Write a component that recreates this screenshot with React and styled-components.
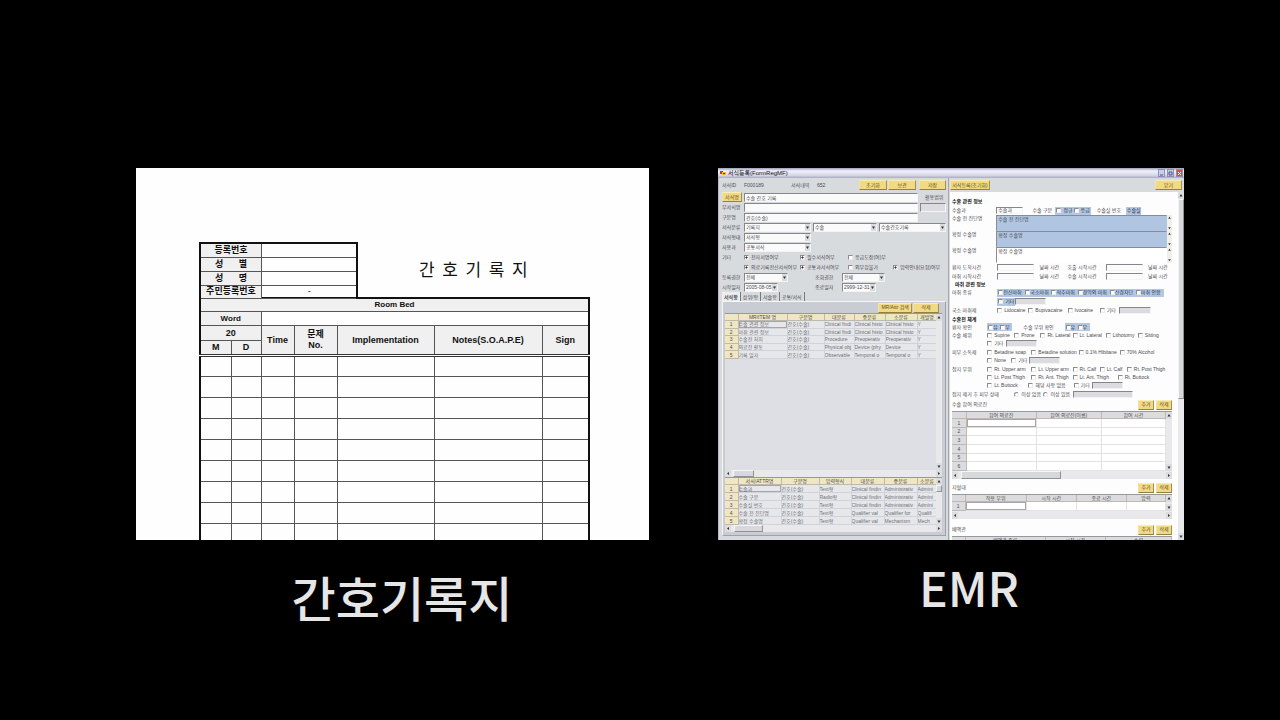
import React, { Children } from "react";
import styled, { createGlobalStyle, css } from "styled-components";

const GlobalStyle = createGlobalStyle`
  *, *::before, *::after { box-sizing: border-box; }
  body {
    margin: 0;
    background: #000;
    font-family: "Noto Sans CJK KR", "Liberation Sans", sans-serif;
  }
  button, input, select, textarea { font: inherit; color: inherit; margin: 0; }
`;

/* ---------- Page ---------- */

const Page = styled.main`
  min-height: 100vh;
  padding: 168px 96px 32px 136px;
  display: grid;
  grid-template-columns: minmax(0, 513fr) minmax(0, 466fr);
  grid-template-rows: auto 1fr;
  column-gap: 69px;
  background: #000;
`;

const Caption = styled.h2`
  margin: 0;
  padding-top: ${(p) => p.$top}px;
  padding-left: ${(p) => p.$shift}px;
  color: #e6e6e6;
  font-size: 48px;
  font-weight: 500;
  line-height: 72px;
  text-align: center;
`;

/* ---------- Paper nursing record ---------- */

const Paper = styled.section`
  padding: 74px 61px 0 63px;
  background: #fefefe;
  color: #111;
  font-family: "Liberation Sans", "Noto Sans CJK KR", sans-serif;
  font-size: 9px;
  line-height: 11px;
`;

const PaperHead = styled.header`
  display: flex;
  align-items: center;
`;

const PaperTitle = styled.h1`
  flex: 1;
  margin: 0;
  font-family: "Noto Sans CJK KR", sans-serif;
  font-size: 17px;
  font-weight: 400;
  line-height: 20px;
  text-align: center;
  white-space: pre;
`;

const paperTable = css`
  border-collapse: collapse;
  table-layout: fixed;
  border: 2px solid #111;
  th, td {
    padding: 0;
    border: 1px solid #555;
    text-align: center;
    overflow: hidden;
    white-space: nowrap;
  }
  th { background: #f0f0f0; font-weight: 700; }
`;

const InfoTable = styled.table`
  ${paperTable}
  flex: 0 0 41%;
  width: 41%;
  margin-bottom: -2px;
  border-bottom: 0;
  tr { height: 14px; }
  tr:last-child { height: 13px; }
`;

const RecordTable = styled.table`
  ${paperTable}
  width: 100%;
  border-bottom: 0;
  thead tr { height: 14px; }
  thead tr.unit { height: 15px; }
  thead tr.ward { font-size: 8px; }
  tbody tr { height: 21px; }
  tbody tr:first-child td { border-top: 3px double #333; }
  tbody tr:last-child { height: 16px; }
  tbody tr:last-child td { border-bottom: 0; }
`;

const Spread = styled.span`
  display: flex;
  justify-content: space-between;
  padding: 0 14px;
`;

function NursingRecord() {
  return (
    <Paper>
      <PaperHead>
        <InfoTable>
          <colgroup><col style={{ width: "39%" }} /><col /></colgroup>
          <tbody>
            <tr><th scope="row">등록번호</th><td /></tr>
            <tr><th scope="row"><Spread><span>성</span><span>별</span></Spread></th><td /></tr>
            <tr><th scope="row"><Spread><span>성</span><span>명</span></Spread></th><td /></tr>
            <tr><th scope="row">주민등록번호</th><td>-</td></tr>
          </tbody>
        </InfoTable>
        <PaperTitle>간  호  기  록  지</PaperTitle>
      </PaperHead>
      <RecordTable>
        <colgroup>
          {[31, 30, 33, 43, 97, 108, 47].map((w, i) => <col key={i} width={w} />)}
        </colgroup>
        <thead>
          <tr className="ward"><th colSpan={7}>Room Bed</th></tr>
          <tr className="ward"><th colSpan={2}>Word</th><td colSpan={5} /></tr>
          <tr className="unit">
            <th colSpan={2}>20</th>
            <th rowSpan={2}>Time</th>
            <th rowSpan={2}>문제<br />No.</th>
            <th rowSpan={2}>Implementation</th>
            <th rowSpan={2}>Notes(S.O.A.P.E)</th>
            <th rowSpan={2}>Sign</th>
          </tr>
          <tr className="unit"><th>M</th><th>D</th></tr>
        </thead>
        <tbody>
          {Array.from({ length: 9 }, (_, r) => (
            <tr key={r}>{Array.from({ length: 7 }, (_, c) => <td key={c} />)}</tr>
          ))}
        </tbody>
      </RecordTable>
    </Paper>
  );
}

/* ---------- EMR window ---------- */

const Window = styled.section`
  display: flex;
  flex-direction: column;
  min-width: 0;
  background: #d8dbde;
  color: #4c4c50;
  font-family: "Liberation Sans", "Noto Sans CJK KR", sans-serif;
  font-size: 5px;
  line-height: 7px;
  overflow: hidden;
`;

const TitleBar = styled.header`
  display: flex;
  align-items: center;
  gap: 2px;
  height: 10px;
  padding: 0 1px 0 2px;
  background: linear-gradient(#9a9cb8, #f2f2fa 30%, #d4d4e6 75%, #a9aabf);
  color: #111;
  font-size: 6px;
  strong { flex: 1; font-weight: 400; white-space: nowrap; }
`;

const CaptionButton = styled.button`
  display: flex;
  align-items: center;
  justify-content: center;
  padding: 0;
  width: 7px;
  height: 8px;
  border: 1px solid #8b90b4;
  background: ${(p) => (p.$close ? "#d4533f" : "#c9cde6")};
  color: ${(p) => (p.$close ? "#fff" : "#4a5080")};
  svg { width: 5px; height: 5px; }
`;

const Panes = styled.div`
  flex: 1;
  display: grid;
  grid-template-columns: minmax(0, 230fr) minmax(0, 236fr);
`;

const LineBox = styled.div`
  display: flex;
  align-items: center;
  height: ${(p) => p.$h}px;
  margin-top: ${(p) => (p.$group ? 1 : 0)}px;
`;

const Cell = styled.div`
  flex: ${(p) => p.$w} 1 0;
  min-width: 0;
  display: flex;
  align-items: center;
  align-self: stretch;
  white-space: nowrap;
`;

/* A form line: positive widths take the next child, negative ones stay empty. */
function Line({ cols, h = 8, group, children }) {
  const items = Children.toArray(children);
  let next = 0;
  return (
    <LineBox $h={h} $group={group}>
      {cols.map((w, i) => <Cell key={i} $w={Math.abs(w)}>{w > 0 ? items[next++] : null}</Cell>)}
    </LineBox>
  );
}

const YellowButton = styled.button`
  width: 100%;
  height: 10px;
  padding: 0;
  border: 1px solid;
  border-color: #f8edb8 #a58f50 #94803f #f3e3a2;
  background: #f1d985;
  color: #5d4f25;
  line-height: 7px;
  white-space: nowrap;
`;

const Field = styled.input`
  width: 100%;
  min-width: 0;
  height: ${(p) => (p.$open ? 7 : 9)}px;
  padding: 0 1px;
  border: 1px solid;
  border-color: #84868c #f4f4f4 #f4f4f4 #84868c;
  border-radius: 0;
  background: ${(p) => (p.$off ? "#dcdce0" : "#fbfbfb")};
  line-height: 7px;
  outline: 0;
`;

const SelectFrame = styled.span`
  display: flex;
  align-items: center;
  width: 100%;
  height: 9px;
  border: 1px solid;
  border-color: #84868c #f4f4f4 #f4f4f4 #84868c;
  background: #fbfbfb;
  select {
    flex: 1;
    min-width: 0;
    height: 7px;
    padding: 0 0 0 1px;
    border: 0;
    appearance: none;
    background: transparent;
    line-height: 7px;
  }
  svg { flex: none; width: 5px; height: 7px; background: #d9dbde; }
`;

const Arrow = ({ d = "M1 2.5h3L2.5 5z" }) => (
  <svg viewBox="0 0 5 7" aria-hidden="true"><path d={d} fill="#333" /></svg>
);
const UP = "M1 4.5h3L2.5 2z";
const LEFT = "M3.5 2v3L1.5 3.5z";
const RIGHT = "M1.5 2v3l2-1.5z";

function Select({ label, value }) {
  return (
    <SelectFrame>
      <select aria-label={label} defaultValue={value}><option>{value}</option></select>
      <Arrow />
    </SelectFrame>
  );
}

const CheckLabel = styled.label`
  display: flex;
  align-items: center;
  gap: ${(p) => (p.$tight ? 0 : 2)}px;
  input {
    flex: none;
    appearance: none;
    width: 5px;
    height: 5px;
    border: 1px solid;
    border-color: #8a8c90 #ececec #ececec #8a8c90;
    border-radius: ${(p) => (p.$round ? "50%" : 0)};
    background: #fff;
  }
  input:checked {
    background: radial-gradient(#333 40%, #fff 60%);
  }
`;

function Check({ children, checked, tight, type = "checkbox" }) {
  return (
    <CheckLabel $round={type === "radio"} $tight={tight}>
      <input type={type} name={type === "radio" ? "skin" : undefined} defaultChecked={checked} />
      {children}
    </CheckLabel>
  );
}

const BlueStrip = styled.div`
  display: flex;
  align-items: center;
  width: 100%;
  height: 8px;
  padding-left: 1px;
  background: #b3c7e3;
  color: #27384f;
`;

/* Scroll bars */

const Bar = styled.div`
  display: flex;
  flex-direction: ${(p) => (p.$vertical ? "column" : "row")};
  align-items: center;
  flex: none;
  width: ${(p) => (p.$vertical ? "6px" : "auto")};
  height: ${(p) => (p.$vertical ? "auto" : p.$h + "px")};
  background: #e9e9ec;
  svg { flex: none; width: 6px; height: 7px; background: #dcdde0; }
`;

const Thumb = styled.span`
  flex: ${(p) => p.$size} 1 0;
  align-self: stretch;
  border: 1px solid;
  border-color: #f6f6f6 #909296 #909296 #f6f6f6;
  background: #d7d8dc;
`;

const Rest = styled.span`
  flex: ${(p) => p.$size} 1 0;
`;

function HBar({ before, thumb, after, h = 7 }) {
  return (
    <Bar $h={h}>
      <Arrow d={LEFT} /><Rest $size={before} />
      {thumb > 0 && <Thumb $size={thumb} />}
      <Rest $size={after} /><Arrow d={RIGHT} />
    </Bar>
  );
}

function VBar({ thumb, after }) {
  return (
    <Bar $vertical>
      <Arrow d={UP} />{thumb > 0 && <Thumb $size={thumb} />}<Rest $size={after} /><Arrow />
    </Bar>
  );
}

/* Data grids */

const GridFrame = styled.div`
  flex: ${(p) => (p.$grow ? 1 : "none")};
  display: flex;
  flex-direction: column;
  border-top: 1px solid #96989c;
  background: ${(p) => (p.$white ? "#fff" : "#dedfe4")};
`;

const GridBody = styled.div`
  flex: 1;
  display: flex;
  align-items: stretch;
  > div:first-child { flex: 1; min-width: 0; }
`;

const Sheet = styled.table`
  width: 100%;
  height: ${(p) => p.$h}px;
  table-layout: fixed;
  border-collapse: collapse;
  line-height: 6px;
  th, td {
    padding: 0;
    border: 1px solid ${(p) => (p.$white ? "#e2e2e4" : "#d2d3d8")};
    border-top: 0;
    border-left: 0;
    overflow: hidden;
    white-space: nowrap;
    text-align: left;
    font-weight: 400;
  }
  td { background: ${(p) => (p.$white ? "#fff" : "#e6e7ea")}; color: #6e6f75; }
  th {
    text-align: center;
    background: ${(p) => (p.$white ? "#dcdce0" : "#f1e6c2")};
    border-color: #bdb9ac;
  }
  tbody tr:first-child td:nth-child(2) { box-shadow: inset 0 0 0 1px #a4a6ac; }
`;

function DataSheet({ widths, heads, rows, h, white }) {
  return (
    <Sheet $h={h} $white={white}>
      <colgroup>{widths.map((w, i) => <col key={i} width={w} />)}</colgroup>
      <thead><tr><th />{heads.map((t, i) => <th key={i} scope="col">{t}</th>)}</tr></thead>
      <tbody>
        {rows.map((row, r) => (
          <tr key={r}>
            <th scope="row">{r + 1}</th>
            {row.map((t, c) => <td key={c}>{t}</td>)}
          </tr>
        ))}
      </tbody>
    </Sheet>
  );
}

/* Left pane */

const SetupPane = styled.div`
  display: flex;
  flex-direction: column;
  padding: 0 2px 4px 3px;
  border-left: 1px solid #b5b8c4;
`;

const Tabs = styled.div`
  display: flex;
  height: 9px;
  button {
    padding: 0 2px;
    border: 0;
    border-right: 1px solid #77797d;
    background: transparent;
    line-height: 8px;
    white-space: nowrap;
  }
  button[aria-selected="true"] { background: #eceef0; font-weight: 700; }
`;

const TabPanel = styled.div`
  flex: 1;
  display: flex;
  flex-direction: column;
  padding: 0 3px 3px 2px;
  border: 1px solid;
  border-color: #f6f6f6 #a0a2aa #a0a2aa #f6f6f6;
  background: #c9ccd2;
`;

const attributeRows = [
  ["수술 관련 정보", "간호(수술)", "Clinical findi", "Clinical histo", "Clinical histo", "Y"],
  ["마취 관련 정보", "간호(수술)", "Clinical findi", "Clinical histo", "Clinical histo", "Y"],
  ["수술전 처치", "간호(수술)", "Procedure", "Preoperativ", "Preoperativ", "Y"],
  ["의료진 활동", "간호(수술)", "Physical obj", "Device (phy", "Device", "Y"],
  ["기록 일자", "간호(수술)", "Observable", "Temporal o", "Temporal o", "Y"],
];

const itemRows = [
  ["수술과", "간호(수술)", "Text형", "Clinical findin", "Administrativ", "Admini"],
  ["수술 구분", "간호(수술)", "Radio형", "Clinical findin", "Administrativ", "Admini"],
  ["수술실 번호", "간호(수술)", "Text형", "Clinical findin", "Administrativ", "Admini"],
  ["수술 전 진단명", "간호(수술)", "Text형", "Qualifier val", "Qualifier for", "Qualifi"],
  ["확정 수술명", "간호(수술)", "Text형", "Qualifier val", "Mechanism", "Mech"],
];

function Setup() {
  return (
    <SetupPane>
      <Line h={14} cols={[22, 47, 26, 42, 28, -1, 28, -3, 27]}>
        <span>서식ID</span><span>F000189</span><span>서식내역</span><span>652</span>
        <YellowButton>초기화</YellowButton><YellowButton>보관</YellowButton><YellowButton>저장</YellowButton>
      </Line>
      <Line h={10} cols={[20, -2, 174, -7, 21]}>
        <YellowButton>서식명</YellowButton>
        <Field aria-label="서식명" defaultValue="수술 간호 기록" />
        <span>활용범위</span>
      </Line>
      <Line h={10} cols={[22, 174, -2, 26]}>
        <label htmlFor="sub">부서식명</label><Field id="sub" /><Field $off aria-label="활용범위" />
      </Line>
      <Line h={10} cols={[22, 174, -28]}>
        <label htmlFor="kind">구분명</label><Field id="kind" defaultValue="간호(수술)" />
      </Line>
      <Line h={10} cols={[22, 67, -2, 64, -2, 67]}>
        <span>서식분류</span><Select label="대분류" value="기록지" />
        <Select label="중분류" value="수술" /><Select label="소분류" value="수술간호기록" />
      </Line>
      <Line h={10} cols={[22, 67, -135]}><span>서식형태</span><Select label="서식형태" value="서식형" /></Line>
      <Line h={10} cols={[22, 67, -135]}><span>사용과</span><Select label="사용과" value="공통서식" /></Line>
      <Line h={10} cols={[22, 56, 48, 98]}>
        <span>기타</span><Check checked>전자서명여부</Check><Check checked>필수서식여부</Check><Check>응급도장(여)부</Check>
      </Line>
      <Line h={10} cols={[-22, 56, 48, 45, 53]}>
        <Check checked>의료기록전산서식여부</Check><Check checked>공통과서식여부</Check>
        <Check>외부참불가</Check><Check checked>입력안내(요청)여부</Check>
      </Line>
      <Line h={10} cols={[22, 44, -27, 27, 43, -61]}>
        <span>등록권한</span><Select label="등록권한" value="전체" />
        <span>조회권한</span><Select label="조회권한" value="전체" />
      </Line>
      <Line h={10} cols={[22, 34, -37, 27, 34, -70]}>
        <span>시작일자</span><Select label="시작일자" value="2005-08-05" />
        <span>종료일자</span><Select label="종료일자" value="2999-12-31" />
      </Line>
      <Tabs role="tablist">
        <button role="tab" aria-selected="true">서식항</button>
        <button role="tab">상위/항</button>
        <button role="tab">서술항</button>
        <button role="tab">공통/서식</button>
      </Tabs>
      <TabPanel>
        <Line h={11} cols={[-154, 34, -1, 26, -3]}>
          <YellowButton>MR/Attr 검색</YellowButton><YellowButton>삭제</YellowButton>
        </Line>
        <GridFrame $grow>
          <GridBody>
            <div>
              <DataSheet h={45} widths={[13, 49, 37, 30, 31, 32, 20]}
                heads={["MR/ITEM 명", "구분명", "대분류", "중분류", "소분류", "개발명"]} rows={attributeRows} />
            </div>
            <VBar after={1} />
          </GridBody>
          <HBar before={2} thumb={20} after={190} />
        </GridFrame>
        <GridFrame>
          <GridBody>
            <div>
              <DataSheet h={47} widths={[13, 43, 38, 32, 33, 33, 20]}
                heads={["서식/ATTR명", "구분명", "입력형식", "대분류", "중분류", "소분류"]} rows={itemRows} />
            </div>
            <VBar thumb={6} after={28} />
          </GridBody>
          <HBar before={3} thumb={27} after={176} />
        </GridFrame>
      </TabPanel>
    </SetupPane>
  );
}

/* Right pane */

const PreviewPane = styled.div`
  display: flex;
  flex-direction: column;
  padding-left: 1px;
  border-left: 1px solid #a4a6b4;
`;

const PreviewBody = styled.div`
  flex: 1;
  display: flex;
`;

const Form = styled.form`
  flex: 1;
  min-width: 0;
  padding: 4px 6px 0 2px;
  background: #fdfdfe;
`;

const FormHeading = styled.h3`
  margin: 0;
  padding-left: ${(p) => (p.$indent ? 3 : 0)}px;
  font-size: 5px;
  font-weight: 700;
  line-height: ${(p) => p.$h || 8}px;
  color: #111;
`;

const Note = styled.textarea`
  width: 100%;
  height: 16px;
  padding: 0 1px;
  border: 1px solid;
  border-color: #8a8c90 transparent transparent #8a8c90;
  border-radius: 0;
  background: ${(p) => (p.$blue ? "#b0c5e1" : "#fff")};
  line-height: 6px;
  resize: none;
  overflow: hidden;
`;

const NoteRow = styled(LineBox)`
  align-items: stretch;
`;

const NoteLabel = styled.label`
  flex: 44 1 0;
  min-width: 0;
  white-space: nowrap;
`;

const NoteBar = styled.span`
  display: flex;
  flex-direction: column;
  justify-content: space-between;
  width: 5px;
  height: 16px;
  background: #f0efe9;
  svg { width: 5px; height: 6px; }
`;

const SectionHead = styled.div`
  display: flex;
  align-items: center;
  gap: 2px;
  height: 13px;
  margin-top: ${(p) => p.$gap || 0}px;
  span { flex: 1; }
  button { width: 16px; }
`;

const Clip = styled.div`
  height: 4px;
  overflow: hidden;
`;

function NoteLine({ id, label, blue }) {
  return (
    <NoteRow $h={16}>
      <NoteLabel htmlFor={id}>{label}</NoteLabel>
      <Cell $w={170}><Note id={id} $blue={blue} defaultValue={label} /></Cell>
      <Cell $w={5}><NoteBar><Arrow d={UP} /><Arrow /></NoteBar></Cell>
    </NoteRow>
  );
}

function Section({ title, gap }) {
  return (
    <SectionHead $gap={gap}>
      <span>{title}</span>
      <YellowButton type="button">추가</YellowButton>
      <YellowButton type="button">삭제</YellowButton>
    </SectionHead>
  );
}

const blank = (rows, cols) => Array.from({ length: rows }, () => Array(cols).fill(""));

function Preview() {
  return (
    <PreviewPane>
      <Line h={14} cols={[40, -165, 27, -2]}>
        <YellowButton>서식등록(초기화)</YellowButton><YellowButton>닫기</YellowButton>
      </Line>
      <PreviewBody>
        <Form>
          <FormHeading $h={10}>수술 관련 정보</FormHeading>
          <Line h={9} cols={[44, 27, -9, 23, 35, -6, 29, 15, -31]}>
            <label htmlFor="dept">수술과</label><Field $open id="dept" defaultValue="수술과" />
            <span>수술 구분</span>
            <BlueStrip><Cell $w={1}><Check>정규</Check></Cell><Cell $w={1}><Check>응급</Check></Cell></BlueStrip>
            <span>수술실 번호</span><BlueStrip>수술실</BlueStrip>
          </Line>
          <NoteLine id="pre" label="수술 전 진단명" blue />
          <NoteLine id="fixed" label="확정 수술명" blue />
          <NoteLine id="final" label="확정 수술명" />
          <Line h={9} cols={[45, 37, -5, 28, 38, 37, -5, 24]}>
            <label htmlFor="arrive">환자 도착시간</label><Field $open id="arrive" /><span>날짜 시간</span>
            <label htmlFor="call">호출 시작시간</label><Field $open id="call" /><span>날짜 시간</span>
          </Line>
          <Line cols={[45, 37, -5, 28, 38, 37, -5, 24]}>
            <label htmlFor="anes">마취 시작시간</label><Field $open id="anes" /><span>날짜 시간</span>
            <label htmlFor="oper">수술 시작시간</label><Field $open id="oper" /><span>날짜 시간</span>
          </Line>
          <FormHeading $indent>마취 관련 정보</FormHeading>
          <Line h={9} cols={[45, 166, -8]}>
            <span>마취 종류</span>
            <BlueStrip>
              {[["전신마취", 27], ["국소마취", 26], ["척추마취", 26], ["경막외 마취", 32], ["신경차단", 26], ["마취 안함", 28]].map(
                ([t, w]) => <Cell key={t} $w={w}><Check tight>{t}</Check></Cell>
              )}
            </BlueStrip>
          </Line>
          <Line h={9} cols={[-45, 18, 31, -125]}>
            <BlueStrip><Check>기타</Check></BlueStrip><Field $off $open aria-label="기타 마취" />
          </Line>
          <Line h={9} cols={[45, 31, 39, 32, 19, 32, -21]}>
            <span>국소 마취제</span><Check>Lidocaine</Check><Check>Bupivacaine</Check><Check>Ivocaine</Check>
            <Check>기타</Check><Field $off $open aria-label="기타 마취제" />
          </Line>
          <FormHeading>수술전 체계</FormHeading>
          <Line cols={[35, 25, -11, 41, 25, -82]}>
            <span>환자 확인</span>
            <BlueStrip><Cell $w={1}><Check tight>유</Check></Cell><Cell $w={1}><Check tight>무</Check></Cell></BlueStrip>
            <span>수술 부위 확인</span>
            <BlueStrip><Cell $w={1}><Check tight>유</Check></Cell><Cell $w={1}><Check tight>무</Check></Cell></BlueStrip>
          </Line>
          <Line cols={[35, 27, 26, 32, 33, 32, 34]}>
            <span>수술 체위</span><Check>Supine</Check><Check>Prone</Check><Check>Rt. Lateral</Check>
            <Check>Lt. Lateral</Check><Check>Lithotomy</Check><Check>Sitting</Check>
          </Line>
          <Line cols={[-35, 19, 31, -134]}><Check>기타</Check><Field $off $open aria-label="기타 체위" /></Line>
          <Line group cols={[35, 44, 47, 41, 52]}>
            <span>피부 소독제</span><Check>Betadine soap</Check><Check>Betadine solution</Check>
            <Check>0.1% Hibitane</Check><Check>70% Alcohol</Check>
          </Line>
          <Line cols={[-35, 24, 18, 31, -111]}>
            <Check>None</Check><Check>기타</Check><Field $off $open aria-label="기타 소독제" />
          </Line>
          <Line group cols={[35, 44, 41, 27, 27, 45]}>
            <span>접지 부위</span><Check>Rt. Upper arm</Check><Check>Lt. Upper arm</Check>
            <Check>Rt. Calf</Check><Check>Lt. Calf</Check><Check>Rt. Post Thigh</Check>
          </Line>
          <Line cols={[-35, 44, 41, 45, 54]}>
            <Check>Lt. Post Thigh</Check><Check>Rt. Ant. Thigh</Check><Check>Lt. Ant. Thigh</Check><Check>Rt. Buttock</Check>
          </Line>
          <Line cols={[-35, 41, 45, 18, 31, -49]}>
            <Check>Lt. Buttock</Check><Check>해당 사항 없음</Check><Check>기타</Check><Field $off $open aria-label="기타 부위" />
          </Line>
          <Line group cols={[62, 29, 29, 60, -39]}>
            <span>접지 제거 후 피부 상태</span><Check type="radio">이상 없음</Check><Check type="radio">이상 있음</Check>
            <Field $off $open aria-label="피부 상태" />
          </Line>
          <Section title="수술 참여 의료진" />
          <GridFrame $white>
            <GridBody>
              <div>
                <DataSheet white h={59} widths={[14, 70, 65, 64]}
                  heads={["참여 의료진", "참여 의료진(이름)", "참여 시간"]} rows={blank(6, 3)} />
              </div>
              <VBar after={1} />
            </GridBody>
            <HBar h={8} before={3} thumb={98} after={106} />
          </GridFrame>
          <Section title="지혈대" gap={2} />
          <GridFrame $white>
            <GridBody>
              <div>
                <DataSheet white h={16} widths={[13, 61, 50, 50, 39]}
                  heads={["적용 부위", "시작 시간", "종료 시간", "압력"]} rows={blank(1, 4)} />
              </div>
              <VBar after={1} />
            </GridBody>
            <HBar h={8} before={0} thumb={0} after={1} />
          </GridFrame>
          <Section title="배액관" gap={4} />
          <Clip>
            <GridFrame $white>
              <DataSheet white h={7} widths={[13, 80, 60, 66]} heads={["배액관 종류", "시작 시간", "수량"]} rows={[]} />
            </GridFrame>
          </Clip>
        </Form>
        <VBar thumb={200} after={135} />
      </PreviewBody>
    </PreviewPane>
  );
}

const AppIcon = () => (
  <svg width="6" height="6" viewBox="0 0 6 6" aria-hidden="true">
    <path d="M0 1h3v3H0z" fill="#c33a2c" /><path d="M2 2h4v3H2z" fill="#e9bd3c" /><path d="M3 3h2v1H3z" fill="#2c3f94" />
  </svg>
);

function EmrWindow() {
  return (
    <Window>
      <TitleBar>
        <AppIcon />
        <strong>서식등록(FormRegMF)</strong>
        <CaptionButton aria-label="최소화"><svg viewBox="0 0 5 5"><path d="M1 4h3" stroke="currentColor" /></svg></CaptionButton>
        <CaptionButton aria-label="최대화"><svg viewBox="0 0 5 5"><path d="M1 1h3v3H1z" fill="none" stroke="currentColor" /></svg></CaptionButton>
        <CaptionButton $close aria-label="닫기"><svg viewBox="0 0 5 5"><path d="M1 1l3 3M4 1L1 4" stroke="currentColor" /></svg></CaptionButton>
      </TitleBar>
      <Panes><Setup /><Preview /></Panes>
    </Window>
  );
}

export default function App() {
  return (
    <>
      <GlobalStyle />
      <Page>
        <NursingRecord />
        <EmrWindow />
        <Caption $top={20} $shift={19}>간호기록지</Caption>
        <Caption $top={10} $shift={36}>EMR</Caption>
      </Page>
    </>
  );
}
